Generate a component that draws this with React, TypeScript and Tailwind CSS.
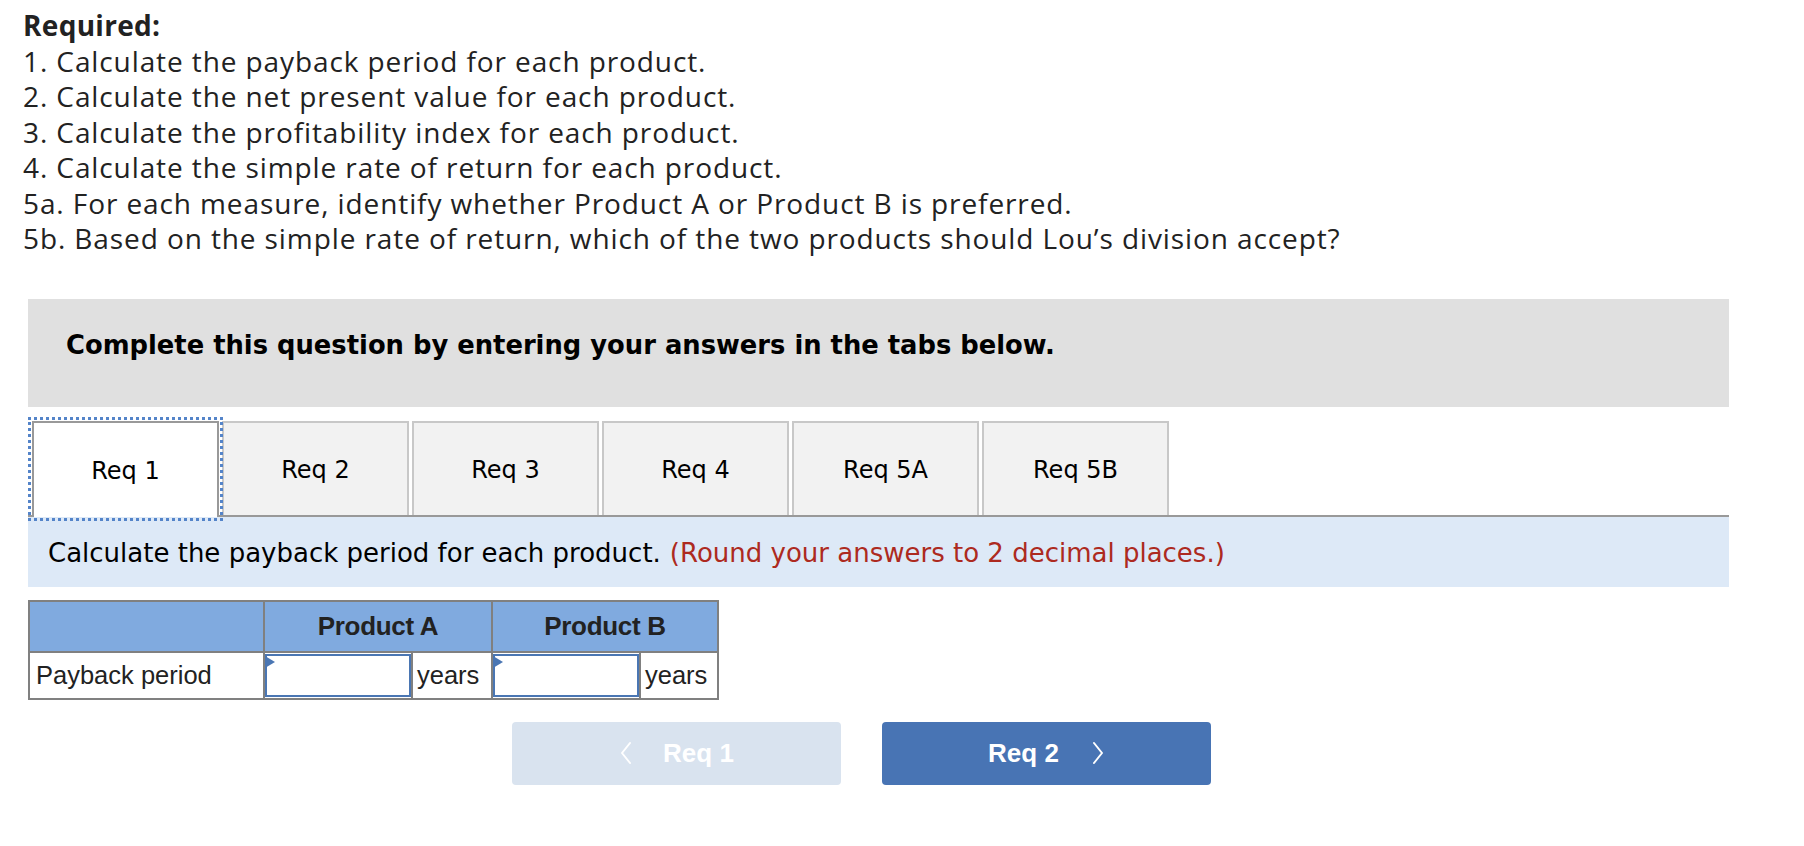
import React from "react";

function Chevron({ dir }: { dir: "left" | "right" }) {
  return (
    <svg width="14" height="24" viewBox="0 0 14 24" fill="none" className="shrink-0">
      {dir === "left" ? (
        <polyline points="11,2 3,12 11,22" stroke="white" strokeWidth="2" strokeLinecap="round" strokeLinejoin="round" />
      ) : (
        <polyline points="3,2 11,12 3,22" stroke="white" strokeWidth="2" strokeLinecap="round" strokeLinejoin="round" />
      )}
    </svg>
  );
}

function InputBox() {
  return (
    <div className="relative w-[146px] h-full py-[1px]">
      <div className="h-full border-2 border-[#4a76b3] bg-white" />
      <div className="absolute left-0 top-[3px] w-0 h-0 border-y-[6px] border-y-transparent border-l-[10px] border-l-[#4a76b3]" />
    </div>
  );
}

export default function App() {
  const tabs = ["Req 1", "Req 2", "Req 3", "Req 4", "Req 5A", "Req 5B"];
  const lines = [
    "1. Calculate the payback period for each product.",
    "2. Calculate the net present value for each product.",
    "3. Calculate the profitability index for each product.",
    "4. Calculate the simple rate of return for each product.",
    "5a. For each measure, identify whether Product A or Product B is preferred.",
    "5b. Based on the simple rate of return, which of the two products should Lou\u2019s division accept?",
  ];
  return (
    <div className="w-[1804px] h-[846px] bg-white overflow-hidden">
      <div className="pt-[8px] pl-[23px] text-[28px] leading-[35.5px] tracking-[0.9px] text-[#222] font-['Open_Sans',sans-serif]">
        <div className="font-bold tracking-[0.3px]">Required:</div>
        {lines.map((l) => (
          <div key={l} className="whitespace-nowrap">{l}</div>
        ))}
      </div>

      <div className="ml-[28px] w-[1701px]">
        <div className="mt-[42px] h-[108px] bg-[#e0e0e0] pl-[38px] pt-[31px] text-[25.8px] leading-[30px] font-bold text-black font-['DejaVu_Sans',Verdana,sans-serif]">
          Complete this question by entering your answers in the tabs below.
        </div>

        <div className="mt-[14px] flex items-end pl-[4px] border-b-2 border-[#999] font-['DejaVu_Sans',Verdana,sans-serif] text-[24px] text-black">
          {tabs.map((t, i) =>
            i === 0 ? (
              <div
                key={t}
                className="relative w-[187px] h-[96px] -mb-[2px] mr-[3px] bg-white border-2 border-b-0 border-[#999] outline-[3px] outline-dotted outline-offset-[1px] outline-[#5484c9] flex items-center justify-center pt-[2px]"
              >
                {t}
              </div>
            ) : (
              <div
                key={t}
                className="w-[187px] h-[94px] mr-[3px] bg-[#f2f2f2] border-2 border-b-0 border-[#c8c8c8] flex items-center justify-center pt-[2px]"
              >
                {t}
              </div>
            )
          )}
        </div>

        <div className="h-[70px] bg-[#dde9f7] flex items-center pl-[20px] pt-[3px] text-[26px] font-['DejaVu_Sans',Verdana,sans-serif] text-black whitespace-nowrap">
          <span>Calculate the payback period for each product.</span>
          <span className="ml-[9px] text-[#ad2a20]">(Round your answers to 2 decimal places.)</span>
        </div>

        <div className="mt-[13px] w-[691px] border-2 border-[#808080] font-['Liberation_Sans',Arial,sans-serif] text-[#222]">
          <div className="flex h-[51px] bg-[#80aadf] border-b-2 border-[#808080] font-bold text-[26px]">
            <div className="w-[235px] border-r-2 border-[#808080]" />
            <div className="w-[228px] border-r-2 border-[#808080] flex items-center justify-center tracking-[-0.3px]">Product A</div>
            <div className="flex-1 flex items-center justify-center tracking-[-0.3px]">Product B</div>
          </div>
          <div className="flex h-[45px] text-[25.5px] bg-white">
            <div className="w-[235px] border-r-2 border-[#808080] flex items-center pl-[6px]">Payback period</div>
            <InputBox />
            <div className="w-[82px] border-l-2 border-r-2 border-[#808080] flex items-center pl-[4px]">years</div>
            <InputBox />
            <div className="flex-1 border-l-2 border-[#808080] flex items-center pl-[4px]">years</div>
          </div>
        </div>

        <div className="mt-[22px] ml-[484px] flex gap-[41px] font-['Liberation_Sans',Arial,sans-serif] font-bold text-[26px] text-white">
          <div className="w-[329px] h-[63px] rounded-[4px] bg-[#d9e3ef] flex items-center justify-center gap-[30px]">
            <Chevron dir="left" />
            <span>Req 1</span>
          </div>
          <div className="w-[329px] h-[63px] rounded-[4px] bg-[#4874b4] flex items-center justify-center gap-[32px]">
            <span>Req 2</span>
            <Chevron dir="right" />
          </div>
        </div>
      </div>
    </div>
  );
}
